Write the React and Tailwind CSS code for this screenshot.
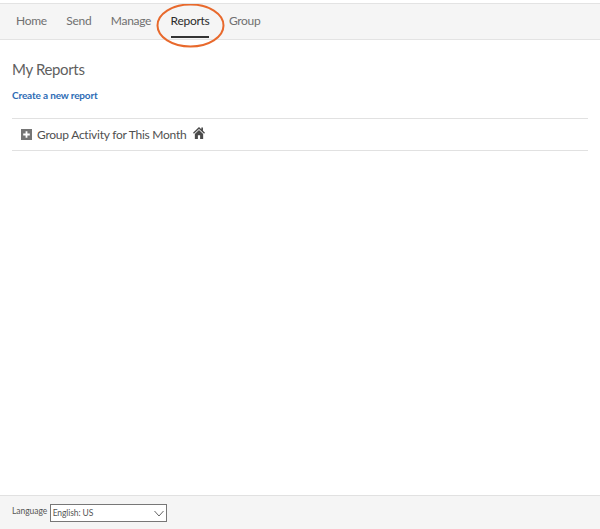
import React from "react";

const tabs = ["Home", "Send", "Manage", "Reports", "Group"];

function HomeIcon() {
  return (
    <svg width="12" height="14" viewBox="0 0 13 14" className="ml-[7px] mb-[3px] shrink-0">
      <path d="M6.5 0.5 L0 6.6 L1 7.7 L6.5 2.6 L12 7.7 L13 6.6 L10.8 4.5 V1 H9 V2.9 Z" fill="#4b4b4b" />
      <path d="M6.5 3.8 L2 8 V13.5 H5.3 V9.5 H7.7 V13.5 H11 V8 Z" fill="#4b4b4b" />
    </svg>
  );
}

function PlusBox() {
  return (
    <svg width="11" height="11" viewBox="0 0 11 11" className="shrink-0">
      <rect width="11" height="11" fill="#757575" />
      <path d="M5.5 2.2 V8.8 M2.2 5.5 H8.8" stroke="#fff" strokeWidth="1.8" />
    </svg>
  );
}

export default function App() {
  return (
    <div className="h-[529px] w-[600px] flex flex-col bg-white font-['Lato',sans-serif] overflow-hidden">
      <div className="relative mt-[3px] h-[37px] shrink-0 bg-[#f5f5f5] border-t border-b border-[#e3e3e3] flex items-stretch pl-[16px] gap-[19.5px]">
        {tabs.map((t) => (
          <div
            key={t}
            className={
              t === "Reports"
                ? "flex items-center text-[12px] tracking-[-0.3px] text-[#2c2c2c] border-b-2 border-[#333] h-[35px] -mb-px pt-[2px] -mt-px"
                : "flex items-center text-[12px] tracking-[-0.3px] text-[#707070] h-[35px] -mt-px"
            }
          >
            {t}
          </div>
        ))}
        {/* hand drawn highlight around the tab */}
        <svg width="70" height="46" viewBox="0 0 70 46" className="absolute left-[156px] top-0">
          <ellipse cx="34.5" cy="21.5" rx="33" ry="21" fill="none" stroke="#e8692c" strokeWidth="2" />
        </svg>
      </div>

      <div className="flex-1 px-[12px]">
        <h1 className="mt-[19px] text-[15px] tracking-[-0.35px] leading-[20px] font-normal text-[#5f5f5f]">My Reports</h1>
        <a className="block mt-[9px] text-[10px] tracking-[-0.15px] leading-[14px] font-bold text-[#2d6cb5]">Create a new report</a>
        <div className="mt-[16px] h-[33px] border-t border-b border-[#e1e1e1] flex items-center pl-[9px]">
          <PlusBox />
          <span className="ml-[5px] text-[12px] tracking-[-0.25px] text-[#505050]">Group Activity for This Month</span>
          <HomeIcon />
        </div>
      </div>

      <div className="h-[34px] shrink-0 bg-[#f5f5f5] border-t border-[#e1e1e1] flex items-center pl-[12px]">
        <span className="text-[8.5px] tracking-[-0.05px] text-[#555] -mt-[2px]">Language</span>
        <div className="ml-[2.5px] mt-px w-[117px] h-[18px] bg-white border border-[#777] flex items-center justify-between pl-[2px] pr-[1px]">
          <span className="text-[8.5px] tracking-[-0.1px] text-[#555]">English: US</span>
          <svg width="10" height="7" viewBox="0 0 10 7" className="mr-[1px]">
            <path d="M0.5 1 L5 6 L9.5 1" fill="none" stroke="#666" strokeWidth="1" />
          </svg>
        </div>
      </div>
    </div>
  );
}
